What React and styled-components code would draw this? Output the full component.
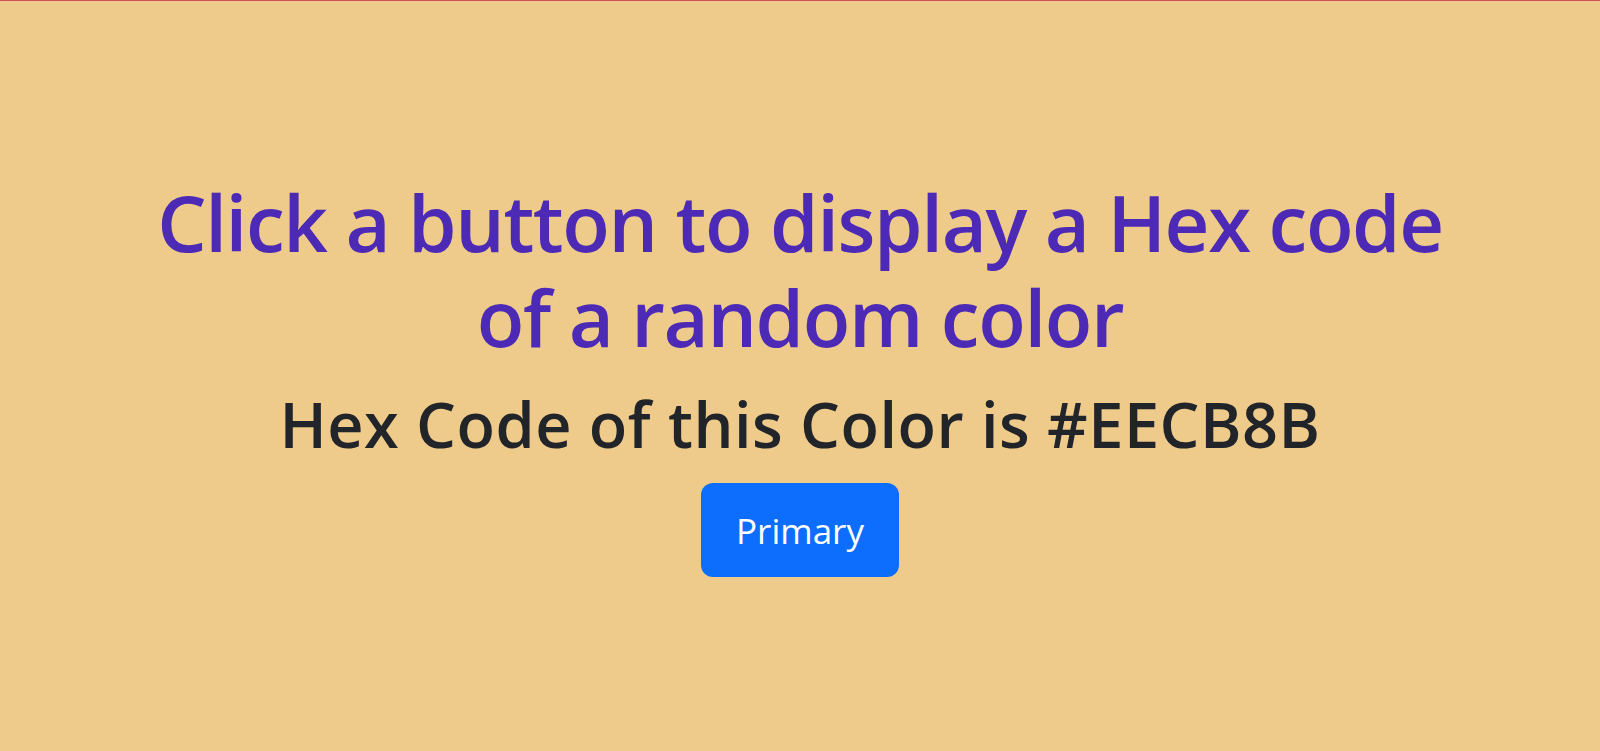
import styled, { createGlobalStyle } from "styled-components";

const GlobalStyle = createGlobalStyle`
  html, body {
    margin: 0;
    padding: 0;
  }
  body {
    background-color: #eecb8b;
    font-family: "Open Sans", "Noto Sans", sans-serif;
    color: #212529;
  }
`;

const Page = styled.main`
  box-sizing: border-box;
  min-height: 100vh;
  border-top: 1px solid #d0525a;
  display: flex;
  flex-direction: column;
  align-items: center;
  justify-content: center;
  text-align: center;
`;

const Title = styled.h1`
  margin: 0;
  max-width: 1320px;
  font-size: 78px;
  font-weight: 600;
  line-height: 95px;
  letter-spacing: -1.4px;
  color: #4c2ab6;
`;

const HexLine = styled.h2`
  margin: 20px 0 21px;
  font-size: 63px;
  font-weight: 600;
  line-height: 77px;
  letter-spacing: 0.5px;
`;

const Button = styled.button`
  width: 198px;
  height: 94px;
  border: none;
  border-radius: 12px;
  background-color: #0d6efd;
  color: #fff;
  font-family: inherit;
  font-size: 35px;
  font-weight: 500;
  cursor: pointer;
`;

const App = () => {
  const color = "#EECB8B";
  return (
    <>
      <GlobalStyle />
      <Page>
        <Title>Click a button to display a Hex code of a random color</Title>
        <HexLine>Hex Code of this Color is {color}</HexLine>
        <Button>Primary</Button>
      </Page>
    </>
  );
};

export default App;
